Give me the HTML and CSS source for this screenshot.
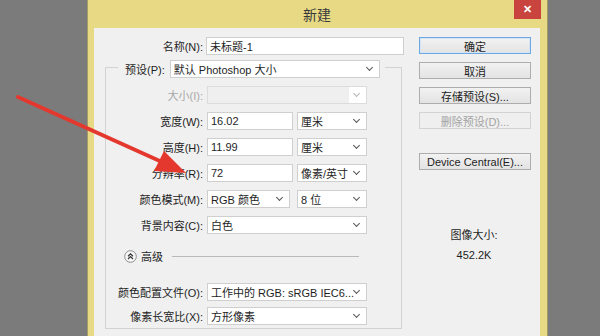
FILE: index.html
```html
<!DOCTYPE html>
<html lang="zh-CN">
<head>
    <meta charset="UTF-8">
    <meta name="viewport" content="width=device-width, initial-scale=1.0">
    <title>新建</title>
    <link rel="stylesheet" href="styles.css">
</head>
<body>
    <div class="screen">
        <div class="dialog">
            <div class="titlebar">
                <span class="title">新建</span>
                <span class="close">✕</span>
            </div>

            <div class="content">
                <div class="form">
                    <div class="row name-row">
                        <span class="label">名称(N):</span>
                        <div class="field name-field">未标题-1</div>
                    </div>

                    <div class="group">
                        <div class="legend">
                            <span class="label">预设(P):</span>
                            <div class="field select preset">默认 Photoshop 大小</div>
                        </div>

                        <div class="rows">
                            <div class="row">
                                <span class="label disabled">大小(I):</span>
                                <div class="field select wide off"></div>
                            </div>
                            <div class="row">
                                <span class="label">宽度(W):</span>
                                <div class="field short">16.02</div>
                                <div class="field select unit">厘米</div>
                            </div>
                            <div class="row">
                                <span class="label">高度(H):</span>
                                <div class="field short">11.99</div>
                                <div class="field select unit">厘米</div>
                            </div>
                            <div class="row">
                                <span class="label">分辨率(R):</span>
                                <div class="field short">72</div>
                                <div class="field select unit">像素/英寸</div>
                            </div>
                            <div class="row">
                                <span class="label">颜色模式(M):</span>
                                <div class="field select mode">RGB 颜色</div>
                                <div class="field select unit">8 位</div>
                            </div>
                            <div class="row">
                                <span class="label">背景内容(C):</span>
                                <div class="field select wide">白色</div>
                            </div>
                        </div>

                        <div class="advanced">
                            <svg class="adv-icon" width="13" height="13" viewBox="0 0 13 13">
                                <circle cx="6.5" cy="6.5" r="5.8" fill="#f8f8f8" stroke="#8c8c8c" stroke-width="1"/>
                                <path d="M4 6.2 L6.5 3.8 L9 6.2 M4 9 L6.5 6.6 L9 9" fill="none" stroke="#333" stroke-width="1.2"/>
                            </svg>
                            <span>高级</span>
                            <span class="adv-line"></span>
                        </div>

                        <div class="rows tight">
                            <div class="row">
                                <span class="label">颜色配置文件(O):</span>
                                <div class="field select wide">工作中的 RGB: sRGB IEC6...</div>
                            </div>
                            <div class="row">
                                <span class="label">像素长宽比(X):</span>
                                <div class="field select wide">方形像素</div>
                            </div>
                        </div>
                    </div>
                </div>

                <div class="side">
                    <div class="btn primary">确定</div>
                    <div class="btn">取消</div>
                    <div class="btn">存储预设(S)...</div>
                    <div class="btn off">删除预设(D)...</div>
                    <div class="btn device">Device Central(E)...</div>
                    <div class="info">
                        <p>图像大小:</p>
                        <p>452.2K</p>
                    </div>
                </div>
            </div>
        </div>

        <!-- red arrow drawn over the screenshot -->
        <svg class="arrow" width="600" height="336" viewBox="0 0 600 336">
            <line x1="18" y1="97" x2="162" y2="162" stroke="#e4382e" stroke-width="4" stroke-linecap="round"/>
            <polygon points="186,173 154,171 164,151" fill="#e4382e"/>
        </svg>
    </div>
</body>
</html>
```

FILE: styles.css
```css
* {
    box-sizing: border-box;
}
body {
    margin: 0;
    background: #7b7b7b;
    font-family: "Liberation Sans", "Noto Sans CJK SC", sans-serif;
    font-size: 11px;
    color: #1e1e1e;
    overflow: hidden;
}
.screen {
    position: relative;
    width: 600px;
    height: 336px;
    overflow: hidden;
}
.dialog {
    margin-left: 87px;
    width: 461px;
    height: 336px;
    background: #e8da84;
    border-left: 1px solid #a39c66;
    border-right: 1px solid #a39c66;
    padding: 0 7px 0 6px;
    display: flex;
    flex-direction: column;
}
.titlebar {
    position: relative;
    height: 28px;
    display: flex;
    align-items: center;
    justify-content: center;
    font-size: 14px;
    color: #3a3a3a;
}
.close {
    position: absolute;
    top: 0;
    right: -1px;
    width: 27px;
    height: 19px;
    background: #c9443e;
    color: #fff;
    display: flex;
    align-items: center;
    justify-content: center;
    font-size: 11px;
    font-weight: bold;
}
.content {
    flex: 1;
    background: #f0f0f0;
    display: flex;
    padding-top: 9px;
}
.form {
    width: 311px;
}
.row {
    display: flex;
    align-items: center;
    height: 18px;
    gap: 4px;
}
.label {
    text-align: right;
    white-space: nowrap;
}
.label.disabled {
    color: #a8a8a8;
}
.field {
    position: relative;
    height: 18px;
    background: #fff;
    border: 1px solid #cfcfcf;
    padding: 0 3px;
    display: flex;
    align-items: center;
    white-space: nowrap;
    overflow: hidden;
}
.select::after {
    content: "";
    position: absolute;
    right: 7px;
    top: 4px;
    width: 4px;
    height: 4px;
    border-right: 1.5px solid #555;
    border-bottom: 1.5px solid #555;
    transform: rotate(45deg);
}
.field.off {
    background: linear-gradient(to left, #fff 17px, #efefef 17px);
    border-color: #dcdcdc;
}
.field.off::after {
    border-color: #b5b5b5;
}
.name-row {
    gap: 3px;
}
.name-row .label {
    width: 109px;
}
.name-field {
    width: 198px;
}
.group {
    margin: 12px 0 0 11px;
    width: 297px;
    border: 1px solid #d3d3d3;
    padding-bottom: 3px;
}
.legend {
    margin: -8px 0 0 12px;
    width: fit-content;
    height: 18px;
    background: #f0f0f0;
    padding: 0 5px 0 7px;
    display: flex;
    align-items: center;
    gap: 5px;
}
.preset {
    width: 210px;
}
.rows {
    display: flex;
    flex-direction: column;
    gap: 8px;
    margin-top: 8px;
}
.rows.tight {
    gap: 6px;
    margin-top: 20px;
}
.rows .label {
    width: 97px;
}
.wide {
    width: 160px;
}
.short {
    width: 86px;
}
.mode {
    width: 83px;
    margin-right: 3px;
}
.unit {
    width: 70px;
}
.advanced {
    margin: 15px 42px 0 0;
    padding-left: 18px;
    height: 14px;
    display: flex;
    align-items: center;
    gap: 4px;
}
.adv-line {
    flex: 1;
    height: 1px;
    margin-left: 5px;
    background: #b9b9b9;
}
.side {
    margin-left: 14px;
    width: 112px;
    display: flex;
    flex-direction: column;
    gap: 8px;
}
.btn {
    height: 17px;
    border: 1px solid #adadad;
    background: linear-gradient(#f2f2f2, #e3e3e3);
    display: flex;
    align-items: center;
    justify-content: center;
    white-space: nowrap;
}
.btn.primary {
    border-color: #6fa8e0;
    box-shadow: inset 0 0 0 1px #d3e6f7;
}
.btn.off {
    color: #a3a3a3;
    border-color: #d3d3d3;
    background: #efefef;
}
.btn.device {
    margin-top: 16px;
}
.info {
    margin-top: 50px;
    text-align: center;
    padding-right: 2px;
}
.info p {
    margin: 0 0 6px;
    line-height: 14px;
}
.arrow {
    position: absolute;
    top: 0;
    left: 0;
    pointer-events: none;
}
```
